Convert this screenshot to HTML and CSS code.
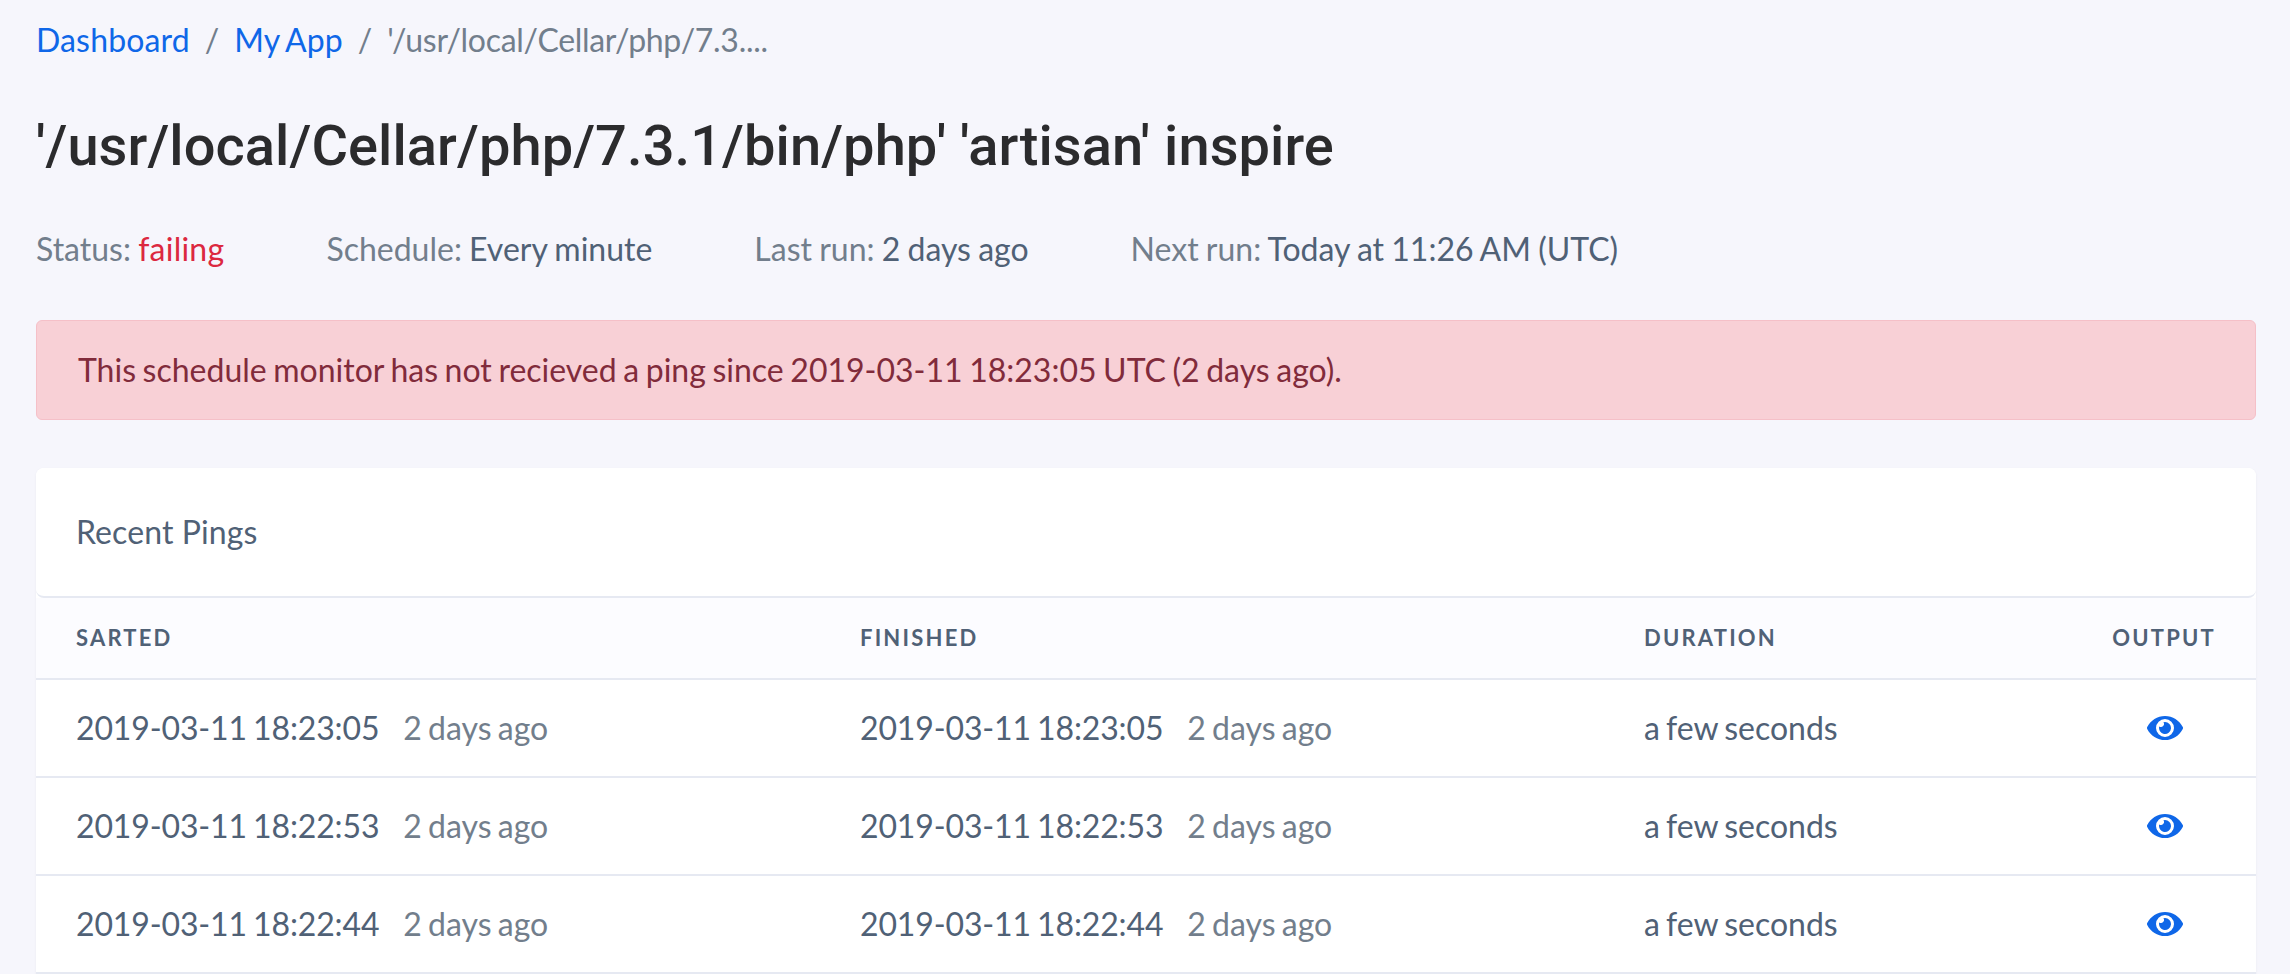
FILE: index.html
```html
<!DOCTYPE html>
<html lang="en">
<head>
<meta charset="utf-8">
<title>Schedule monitor</title>
<link rel="stylesheet" href="styles.css">
</head>
<body>
<nav class="crumbs">
  <a href="#">Dashboard</a><span class="sep">/</span><a href="#">My App</a><span class="sep">/</span><span class="current">'/usr/local/Cellar/php/7.3....</span>
</nav>
<h1>'/usr/local/Cellar/php/7.3.1/bin/php' 'artisan' inspire</h1>
<div class="meta">
  <div><span class="label">Status:</span> <span class="failing">failing</span></div>
  <div><span class="label">Schedule:</span> Every minute</div>
  <div><span class="label">Last run:</span> 2 days ago</div>
  <div><span class="label">Next run:</span> Today at 11:26 AM (UTC)</div>
</div>
<div class="alert">This schedule monitor has not recieved a ping since 2019-03-11 18:23:05 UTC (2 days ago).</div>
<section class="card">
  <div class="card-head">Recent Pings</div>
  <table>
    <thead>
      <tr><th class="c1">Sarted</th><th class="c2">Finished</th><th class="c3">Duration</th><th class="c4">Output</th></tr>
    </thead>
    <tbody>
      <tr><td><span class="stamp">2019-03-11 18:23:05</span><span class="ago">2 days ago</span></td><td><span class="stamp">2019-03-11 18:23:05</span><span class="ago">2 days ago</span></td><td>a few seconds</td><td class="c4"><svg class="eye" viewBox="0 0 576 512"><path d="M572.52 241.4C518.29 135.59 410.93 64 288 64S57.68 135.64 3.48 241.41a32.35 32.35 0 0 0 0 29.19C57.71 376.41 165.07 448 288 448s230.32-71.64 284.52-177.41a32.35 32.35 0 0 0 0-29.19zM288 400a144 144 0 1 1 144-144 143.93 143.93 0 0 1-144 144zm0-240a95.31 95.31 0 0 0-25.31 3.79 47.85 47.85 0 0 1-66.9 66.9A95.78 95.78 0 1 0 288 160z"/></svg></td></tr>
      <tr><td><span class="stamp">2019-03-11 18:22:53</span><span class="ago">2 days ago</span></td><td><span class="stamp">2019-03-11 18:22:53</span><span class="ago">2 days ago</span></td><td>a few seconds</td><td class="c4"><svg class="eye" viewBox="0 0 576 512"><path d="M572.52 241.4C518.29 135.59 410.93 64 288 64S57.68 135.64 3.48 241.41a32.35 32.35 0 0 0 0 29.19C57.71 376.41 165.07 448 288 448s230.32-71.64 284.52-177.41a32.35 32.35 0 0 0 0-29.19zM288 400a144 144 0 1 1 144-144 143.93 143.93 0 0 1-144 144zm0-240a95.31 95.31 0 0 0-25.31 3.79 47.85 47.85 0 0 1-66.9 66.9A95.78 95.78 0 1 0 288 160z"/></svg></td></tr>
      <tr><td><span class="stamp">2019-03-11 18:22:44</span><span class="ago">2 days ago</span></td><td><span class="stamp">2019-03-11 18:22:44</span><span class="ago">2 days ago</span></td><td>a few seconds</td><td class="c4"><svg class="eye" viewBox="0 0 576 512"><path d="M572.52 241.4C518.29 135.59 410.93 64 288 64S57.68 135.64 3.48 241.41a32.35 32.35 0 0 0 0 29.19C57.71 376.41 165.07 448 288 448s230.32-71.64 284.52-177.41a32.35 32.35 0 0 0 0-29.19zM288 400a144 144 0 1 1 144-144 143.93 143.93 0 0 1-144 144zm0-240a95.31 95.31 0 0 0-25.31 3.79 47.85 47.85 0 0 1-66.9 66.9A95.78 95.78 0 1 0 288 160z"/></svg></td></tr>
    </tbody>
  </table>
</section>
</body>
</html>
```
FILE: styles.css
```css
body {
  margin: 0;
  padding: 22px 34px 0 36px;
  box-sizing: border-box;
  height: 974px;
  overflow: hidden;
  background: #f6f6fc;
  font-family: Lato, sans-serif;
  font-size: 32px;
  line-height: 1.5;
  word-spacing: -2px;
  color: #506176;
}
.crumbs { height: 36px; line-height: 36px; display: flex; }
.crumbs a { color: #0f67e8; text-decoration: none; letter-spacing: .15px; }
.sep { color: #727e8c; margin: 0 15px; }
.current { color: #727e8c; letter-spacing: -.3px; }
h1 {
  margin: 58px 0 0;
  font-family: Roboto, sans-serif;
  font-weight: 500;
  font-size: 56px;
  line-height: 60px;
  letter-spacing: .08px;
  word-spacing: 0;
  color: #2b2b2d;
}
.meta { display: flex; gap: 102px; margin-top: 53px; line-height: 40px; word-spacing: -1px; }
.label { color: #727e8c; }
.failing { color: #dc2840; letter-spacing: .25px; }
.alert {
  margin-top: 51px;
  height: 100px;
  box-sizing: border-box;
  padding: 0 41px;
  line-height: 98px;
  word-spacing: -1.6px;
  background: #f8d0d6;
  border: 1px solid #f5c0c8;
  border-radius: 6px;
  color: #812b3b;
}
.card {
  margin-top: 48px;
  background: #fff;
  border-radius: 8px 8px 0 0;
  box-shadow: 0 1px 3px rgba(0,0,0,.05);
}
.card-head {
  height: 130px;
  box-sizing: border-box;
  padding: 0 40px;
  line-height: 128px;
  word-spacing: 0;
  letter-spacing: .1px;
  border-bottom: 2px solid #e6e9f2;
  border-radius: 8px;
  background: #fff;
}
table { width: 100%; border-collapse: separate; border-spacing: 0; table-layout: fixed; background: #fcfcff; }
tbody { background: #fff; }
th {
  height: 82px;
  box-sizing: border-box;
  padding: 0 0 2px 40px;
  text-align: left;
  font-size: 22px;
  font-weight: 700;
  letter-spacing: 2.2px;
  text-transform: uppercase;
  color: #506176;
  border-bottom: 2px solid #e6e9f2;
}
td { height: 98px; box-sizing: border-box; padding: 0 0 0 40px; border-bottom: 2px solid #e6e9f2; white-space: nowrap; }
.c1, .c2 { width: 784px; }
.c3 { width: 464px; }
th.c4 { text-align: right; padding: 0 40px 2px 0; }
td.c4 { padding: 0 73px 0 0; }
.stamp { letter-spacing: -.13px; }
.ago { color: #727e8c; margin-left: 24px; }
.eye { display: block; margin-left: auto; width: 36px; height: 32px; fill: #0f67e8; }
```
